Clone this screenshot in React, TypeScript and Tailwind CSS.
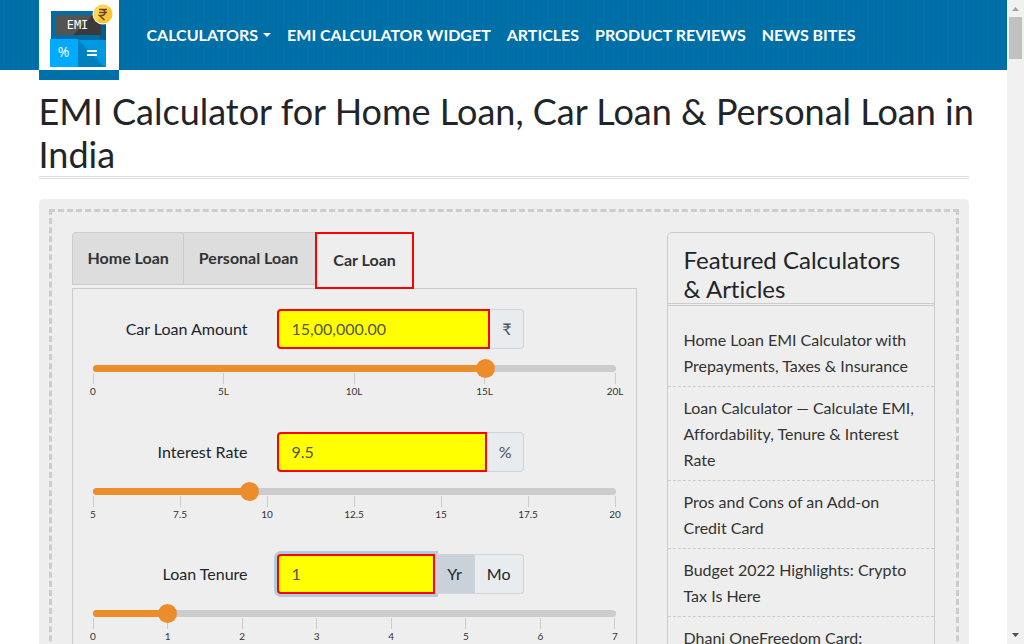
import React, { useState } from "react";

const NAV_LINKS = ["EMI CALCULATOR WIDGET", "ARTICLES", "PRODUCT REVIEWS", "NEWS BITES"];

const ARTICLES = [
  "Home Loan EMI Calculator with Prepayments, Taxes & Insurance",
  "Loan Calculator — Calculate EMI, Affordability, Tenure & Interest Rate",
  "Pros and Cons of an Add-on Credit Card",
  "Budget 2022 Highlights: Crypto Tax Is Here",
  "Dhani OneFreedom Card:",
];

function Logo() {
  return (
    <svg viewBox="0 0 80 70" className="block h-[70px] w-20 bg-white" role="img" aria-label="EMI Calculator">
      <rect x="12" y="11" width="55" height="29" fill="#006ca5" />
      <path d="M61 18 67 24V40H61Z" fill="#005c8e" />
      <rect x="16" y="15" width="46" height="20" fill="#3a3a3a" />
      <path d="M16 15H54L34 35H16Z" fill="#545454" />
      <rect x="11" y="39" width="28" height="28" fill="#00aaff" />
      <rect x="39" y="40" width="28" height="27" fill="#0098e0" />
      <path d="M39 40 66 67H39Z" fill="#0080bf" />
      <text x="38.500" y="29" textAnchor="middle" fill="#fff" fontSize="12" fontFamily="'DejaVu Sans Mono', monospace">EMI</text>
      <text x="24.500" y="57" textAnchor="middle" fill="#fff" fontSize="14" fontFamily="'Open Sans', sans-serif">%</text>
      <path d="M48 51H58M48 55H58" stroke="#fff" strokeWidth="2" />
      <circle cx="64" cy="14" r="10.500" fill="#fff" />
      <circle cx="64" cy="14" r="9.500" fill="#fbc531" />
      <path d="M57.300 20.700A9.500 9.500 0 0 1 70.700 7.300Z" fill="#ffd84d" />
      <path d="M60 9.500H68M60 12.500H68M60 9.500H62.500C67 9.500 67 15.500 62.500 15.500H60.500L65.500 20" fill="none" stroke="#6b4126" strokeWidth="1.500" />
    </svg>
  );
}

function Header() {
  return (
    <header className="h-[70px] bg-[#0070a8] bg-[repeating-linear-gradient(90deg,#00000005_0_2px,transparent_2px_5px)]">
      <div className="mx-auto flex max-w-[930px] items-start">
        <a href="#home" className="border-b-10 border-[#0070a8]">
          <Logo />
        </a>
        <nav className="ml-7 flex h-[70px] items-center gap-4 text-base font-bold whitespace-nowrap text-white">
          <button type="button" className="flex items-center gap-[5px]">
            CALCULATORS
            <svg viewBox="0 0 8 4" className="h-1 w-2 shrink-0" aria-hidden="true">
              <path d="M0 0H8L4 4Z" fill="currentColor" />
            </svg>
          </button>
          {NAV_LINKS.map((label) => (
            <a key={label} href="#nav">{label}</a>
          ))}
        </nav>
      </div>
    </header>
  );
}

type SliderProps = {
  label: string;
  min: number;
  max: number;
  step: number;
  value: number;
  onChange: (value: number) => void;
  ticks: string[];
};

function Slider({ label, min, max, step, value, onChange, ticks }: SliderProps) {
  return (
    <div className="mt-4">
      <div className="relative h-[7px] rounded-full bg-[#cccccc]">
        <div
          className="h-full rounded-full bg-[#ed8c2b]"
          style={{ width: `${((value - min) / (max - min)) * 100}%` }}
        />
        <input
          type="range"
          aria-label={label}
          min={min}
          max={max}
          step={step}
          value={value}
          onChange={(e) => onChange(Number(e.target.value))}
          className="absolute -inset-x-[9px] -top-1.5 h-[19px] w-[calc(100%+18px)] appearance-none bg-transparent [&::-webkit-slider-thumb]:size-[19px] [&::-webkit-slider-thumb]:appearance-none [&::-webkit-slider-thumb]:rounded-full [&::-webkit-slider-thumb]:bg-[#ed8c2b]"
        />
      </div>
      <div className="mt-px flex justify-between">
        {ticks.map((tick) => (
          <div key={tick} className="flex w-px flex-col items-center text-[10px] leading-3 text-[#333333]">
            <span className="h-[11px] w-px bg-[#cccccc]" />
            <span className="mt-px">{tick}</span>
          </div>
        ))}
      </div>
    </div>
  );
}

const ROW = "flex items-center";
const LABEL = "w-[155px] text-right";
const GROUP = "ml-[29px] flex w-[247px]";
const FIELD =
  "h-10 min-w-0 flex-1 rounded-l border-2 border-[#ff0000] bg-[#ffff00] px-[13px] pb-0.5 text-[#555555] outline-none";
const ADDON = "flex h-10 items-center border border-l-0 border-[#ced4da]";
const UNIT = "rounded-r bg-[#e9ecef] pr-[11px] pl-3 text-[#495057]";

function LoanForm() {
  const [amount, setAmount] = useState(1505000);
  const [rate, setRate] = useState(9.5);
  const [tenure, setTenure] = useState(1);
  return (
    <form className="border border-[#cccccc] px-5 pt-5 pb-10">
      <div className="h-[123px]">
        <div className={ROW}>
          <label htmlFor="amount" className={LABEL}>Car Loan Amount</label>
          <div className={GROUP}>
            <input id="amount" type="text" defaultValue="15,00,000.00" className={FIELD} />
            <span className={`${ADDON} ${UNIT}`}>₹</span>
          </div>
        </div>
        <Slider label="Car loan amount slider" min={0} max={2000000} step={5000} value={amount} onChange={setAmount} ticks={["0", "5L", "10L", "15L", "20L"]} />
      </div>
      <div className="h-[122px]">
        <div className={ROW}>
          <label htmlFor="rate" className={LABEL}>Interest Rate</label>
          <div className={GROUP}>
            <input id="rate" type="text" defaultValue="9.5" className={FIELD} />
            <span className={`${ADDON} ${UNIT}`}>%</span>
          </div>
        </div>
        <Slider label="Interest rate slider" min={5} max={20} step={0.25} value={rate} onChange={setRate} ticks={["5", "7.5", "10", "12.5", "15", "17.5", "20"]} />
      </div>
      <div className="h-[123px]">
        <div className={ROW}>
          <label htmlFor="tenure" className={LABEL}>Loan Tenure</label>
          <div className={GROUP}>
            <input id="tenure" type="text" defaultValue="1" className={`${FIELD} shadow-[0_0_0_3px_#b1cddd]`} />
            <button type="button" className={`${ADDON} bg-[#c9d1d9] px-3`}>Yr</button>
            <button type="button" className={`${ADDON} rounded-r bg-[#e9ecef] px-3`}>Mo</button>
          </div>
        </div>
        <Slider label="Loan tenure slider" min={0} max={7} step={0.5} value={tenure} onChange={setTenure} ticks={["0", "1", "2", "3", "4", "5", "6", "7"]} />
      </div>
    </form>
  );
}

function Tabs() {
  return (
    <div className="flex items-start font-bold text-[#333333]" role="tablist">
      <button type="button" role="tab" aria-selected="false" className="h-[53px] rounded-tl border border-[#cccccc] bg-[#dddddd] pr-3.5 pb-0.5 pl-[15px]">
        Home Loan
      </button>
      <button type="button" role="tab" aria-selected="false" className="h-[53px] border-y border-[#cccccc] bg-[#dddddd] pr-[17px] pb-0.5 pl-[15px]">
        Personal Loan
      </button>
      <button type="button" role="tab" aria-selected="true" className="relative -mb-px h-[57px] border-2 border-[#ff0000] bg-[#eeeeee] px-4 pb-0.5">
        Car Loan
      </button>
    </div>
  );
}

function Featured() {
  return (
    <aside className="w-[268px] shrink-0 rounded-t-[5px] border border-[#cccccc]">
      <h2 className="border-b-3 border-double border-[#cccccc] px-4 pt-3 text-2xl leading-[29px]">
        Featured Calculators & Articles
      </h2>
      <ul className="mt-[13px]">
        {ARTICLES.map((title) => (
          <li key={title} className="border-b border-dashed border-[#cccccc] px-4 pt-2 pb-[7px] leading-[26px]">
            <a href="#article" className="block text-[#333333]">{title}</a>
          </li>
        ))}
      </ul>
    </aside>
  );
}

function ScrollRail() {
  return (
    <div className="flex w-[17px] shrink-0 flex-col items-center justify-between bg-[#f1f1f1]" aria-hidden="true">
      <div className="flex flex-col items-center">
        <svg viewBox="0 0 7 4" className="mt-[7px] h-1 w-[7px]"><path d="M0 4H7L3.500 0Z" fill="#a3a3a3" /></svg>
        <div className="mt-1.5 h-[42px] w-[13px] bg-[#c1c1c1]" />
      </div>
      <svg viewBox="0 0 7 4" className="mb-[7px] h-1 w-[7px]"><path d="M0 0H7L3.500 4Z" fill="#505050" /></svg>
    </div>
  );
}

export default function App() {
  return (
    <div className="flex h-screen overflow-hidden bg-white font-['Lato','Noto_Sans',sans-serif] text-base text-[#212529] [font-variant-ligatures:none]">
      <div className="min-w-0 flex-1 overflow-hidden">
        <Header />
        <main className="mx-auto max-w-[930px] pt-5">
          <h1 className="border-b-3 border-double border-[#dddddd] text-4xl leading-[43px]">
            <span className="lg:whitespace-nowrap">EMI Calculator for Home Loan, Car Loan & Personal Loan in</span> India
          </h1>
          <div className="mt-5 flex items-start gap-[30px] rounded-[5px] bg-[#eeeeee] py-[33px] pr-[34px] pl-[33px] outline-3 -outline-offset-[13px] outline-[#cccccc] outline-dashed">
            <section className="min-w-0 flex-1">
              <Tabs />
              <LoanForm />
            </section>
            <Featured />
          </div>
        </main>
      </div>
      <ScrollRail />
    </div>
  );
}
